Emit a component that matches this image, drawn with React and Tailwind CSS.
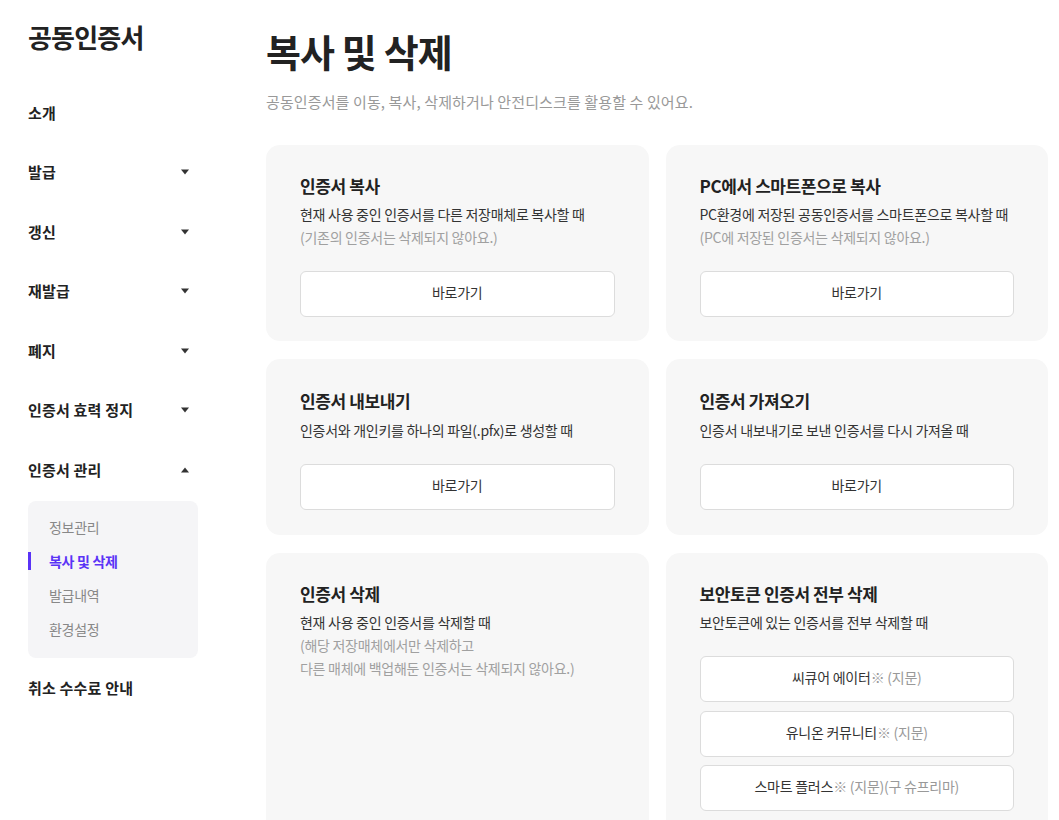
import { useState } from 'react'

const FONT = { fontFamily: '"Noto Sans CJK KR", "Noto Sans", sans-serif' }

const navItems = [
  { label: '소개' },
  { label: '발급', caret: 'down' },
  { label: '갱신', caret: 'down' },
  { label: '재발급', caret: 'down' },
  { label: '폐지', caret: 'down' },
  { label: '인증서 효력 정지', caret: 'down' },
  { label: '인증서 관리', caret: 'up' },
]

const subItems = ['정보관리', '복사 및 삭제', '발급내역', '환경설정']

function Caret({ dir }) {
  return (
    <svg width="10" height="6" viewBox="0 0 10 6" className="shrink-0">
      {dir === 'down'
        ? <path d="M1 0.5h8L5 5.5z" fill="#333" />
        : <path d="M1 5.5h8L5 0.5z" fill="#333" />}
    </svg>
  )
}

function NavRow({ label, caret }) {
  return (
    <div className="h-[59.5px] flex items-center justify-between pr-[8px]">
      <span className="text-[15px] font-bold text-[#222] tracking-[0.2px]">{label}</span>
      {caret && <Caret dir={caret} />}
    </div>
  )
}

function Sidebar() {
  const active = '복사 및 삭제'
  return (
    <aside className="w-[170px] shrink-0">
      <div className="pt-[20px] h-[83px]">
        <h1 className="text-[26px] leading-[34px] font-bold text-[#222] tracking-[-0.8px]">공동인증서</h1>
      </div>
      {navItems.map(n => <NavRow key={n.label} {...n} />)}
      <div className="mt-[1.5px] bg-[#f5f5f7] rounded-[8px] pt-[9px] pb-[12px]">
        {subItems.map(s => (
          <div key={s} className="relative h-[34px] flex items-center pl-[21px]">
            {s === active && <span className="absolute left-0 top-[8px] w-[3px] h-[18px] bg-[#5a33f6]" />}
            <span className={s === active
              ? 'text-[14px] font-bold text-[#5a33f6] tracking-[-0.3px]'
              : 'text-[14px] text-[#888] tracking-[-0.3px]'}>{s}</span>
          </div>
        ))}
      </div>
      <NavRow label="취소 수수료 안내" />
    </aside>
  )
}

function GoButton({ children }) {
  return (
    <button className="w-full h-[46px] pb-[3px] bg-white border border-[#dcdcdc] rounded-[6px] text-[14px] text-[#333] tracking-[-0.25px] flex items-center justify-center whitespace-nowrap">
      {children}
    </button>
  )
}

function Card({ title, desc, notes = [], children, tall }) {
  return (
    <div className={tall
      ? 'bg-[#f7f7f7] rounded-[14px] pt-[29px] px-[34px] pb-[25px] flex flex-col'
      : 'bg-[#f7f7f7] rounded-[14px] pt-[28px] px-[34px] pb-[24px] flex flex-col'}>
      <h3 className="text-[17px] leading-[26px] font-bold text-[#222] tracking-[-0.4px]">{title}</h3>
      <div className={tall
        ? 'mt-[5px] text-[14px] leading-[23px] tracking-[-0.28px] whitespace-nowrap'
        : 'mt-[4px] text-[14px] leading-[23px] tracking-[-0.28px] whitespace-nowrap'}>
        <p className="text-[#333]">{desc}</p>
        {notes.map(n => <p key={n} className="text-[#a0a0a0]">{n}</p>)}
      </div>
      {children && <div className="mt-[22px] flex flex-col gap-[8.5px]">{children}</div>}
    </div>
  )
}

function Gray({ children }) {
  return <span className="text-[#999]">{children}</span>
}

export default function App() {
  const [page] = useState('copy')
  return (
    <div style={FONT} className="bg-white min-h-[820px] flex gap-[68px] pl-[28px] pr-[11px]" data-page={page}>
      <Sidebar />
      <main className="flex-1 min-w-0">
        <h2 className="pt-[26px] text-[38px] leading-[50px] font-bold text-[#222] tracking-[-0.9px]">복사 및 삭제</h2>
        <p className="mt-[16px] text-[15px] leading-[20px] text-[#999] tracking-[0.12px]">
          공동인증서를 이동, 복사, 삭제하거나 안전디스크를 활용할 수 있어요.
        </p>
        <div className="mt-[33px] grid grid-cols-2 gap-x-[17px] gap-y-[18px]">
          <Card
            title="인증서 복사"
            desc="현재 사용 중인 인증서를 다른 저장매체로 복사할 때"
            notes={['(기존의 인증서는 삭제되지 않아요.)']}
          >
            <GoButton>바로가기</GoButton>
          </Card>
          <Card
            title="PC에서 스마트폰으로 복사"
            desc="PC환경에 저장된 공동인증서를 스마트폰으로 복사할 때"
            notes={['(PC에 저장된 인증서는 삭제되지 않아요.)']}
          >
            <GoButton>바로가기</GoButton>
          </Card>
          <Card tall title="인증서 내보내기" desc="인증서와 개인키를 하나의 파일(.pfx)로 생성할 때">
            <GoButton>바로가기</GoButton>
          </Card>
          <Card tall title="인증서 가져오기" desc="인증서 내보내기로 보낸 인증서를 다시 가져올 때">
            <GoButton>바로가기</GoButton>
          </Card>
          <Card
            title="인증서 삭제"
            desc="현재 사용 중인 인증서를 삭제할 때"
            notes={['(해당 저장매체에서만 삭제하고', '다른 매체에 백업해둔 인증서는 삭제되지 않아요.)']}
          />
          <Card title="보안토큰 인증서 전부 삭제" desc="보안토큰에 있는 인증서를 전부 삭제할 때">
            <GoButton>씨큐어 에이터<Gray>※ (지문)</Gray></GoButton>
            <GoButton>유니온 커뮤니티<Gray>※ (지문)</Gray></GoButton>
            <GoButton>스마트 플러스<Gray>※ (지문)(구 슈프리마)</Gray></GoButton>
          </Card>
        </div>
      </main>
    </div>
  )
}
